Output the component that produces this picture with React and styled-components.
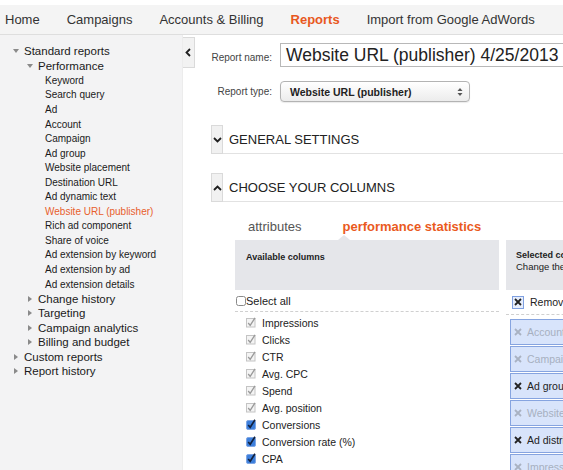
import styled, { createGlobalStyle } from "styled-components";

const GlobalStyle = createGlobalStyle`
  html, body {
    margin: 0;
    padding: 0;
    background: #fff;
  }
  body {
    font-family: "Liberation Sans", Arial, sans-serif;
    color: #222;
  }
`;

const Page = styled.div`
  width: 563px;
  height: 470px;
  overflow: hidden;
  display: flex;
  flex-direction: column;
  background: #fff;
`;

const TopNav = styled.div`
  flex: none;
  height: 29px;
  border-top: 5px solid #fff;
  border-bottom: 1px solid #dedede;
  background: #f4f4f4;
  display: flex;
  align-items: center;
  gap: 27px;
  padding-left: 5px;
`;

const NavItem = styled.div`
  font-size: 13px;
  white-space: nowrap;
  color: ${(p) => (p.$active ? "#e8581e" : "#333")};
  font-weight: ${(p) => (p.$active ? "bold" : "normal")};
`;

const Body = styled.div`
  flex: 1;
  display: flex;
  min-height: 0;
`;

const Sidebar = styled.div`
  flex: none;
  width: 182px;
  background: #f3f3f4;
  border-right: 1px solid #ececec;
  padding-top: 9px;
`;

const TreeRow = styled.div`
  display: flex;
  align-items: center;
  height: 14.55px;
  padding-left: ${(p) => p.$indent}px;
  font-size: ${(p) => (p.$small ? "10px" : "11.5px")};
  color: ${(p) => (p.$active ? "#e8602c" : "#1a1a1a")};
  white-space: nowrap;
`;

const Tri = styled.span`
  flex: none;
  width: 0;
  height: 0;
  margin-right: ${(p) => (p.$dir === "down" ? 5 : 6)}px;
  ${(p) =>
    p.$dir === "down"
      ? `border-left: 3px solid transparent;
         border-right: 3px solid transparent;
         border-top: 4px solid #8a8a8a;`
      : `border-top: 3px solid transparent;
         border-bottom: 3px solid transparent;
         border-left: 4px solid #8a8a8a;`}
`;

const Toggle = styled.div`
  flex: none;
  align-self: flex-start;
  margin-top: 2px;
  width: 12px;
  height: 31px;
  box-sizing: border-box;
  background: #f2f2f2;
  border: 1px solid #dadada;
  border-left: none;
  display: flex;
  align-items: center;
  justify-content: center;
`;

const Main = styled.div`
  flex: 1;
  min-width: 0;
  overflow: hidden;
  padding-left: 16px;
  padding-top: 8px;
`;

const FieldRow = styled.div`
  display: flex;
  align-items: ${(p) => p.$align || "center"};
  margin-top: ${(p) => p.$mt || 0}px;
`;

const FieldLabel = styled.div`
  flex: none;
  width: 61px;
  margin-right: 8px;
  text-align: right;
  font-size: 10px;
  color: #444;
  white-space: nowrap;
`;

const NameInput = styled.div`
  flex: none;
  height: 24px;
  box-sizing: border-box;
  width: 320px;
  border: 1px solid #b8b8b8;
  padding-left: 5px;
  font-size: 17.5px;
  line-height: 22px;
  color: #222;
  white-space: nowrap;
`;

const Select = styled.div`
  flex: none;
  width: 190px;
  height: 21px;
  box-sizing: border-box;
  border: 1px solid #b3b3b3;
  border-radius: 4px;
  background: linear-gradient(#ffffff, #ececec);
  box-shadow: 0 1px 1px rgba(0, 0, 0, 0.08);
  display: flex;
  align-items: center;
  justify-content: space-between;
  padding: 0 6px 0 9px;
  font-size: 10.5px;
  font-weight: bold;
  color: #222;
`;

const SectionHeader = styled.div`
  display: flex;
  align-items: center;
  height: 28px;
  margin-top: ${(p) => p.$mt}px;
  border-bottom: 1px solid #e2e2e2;
`;

const SectionToggle = styled.div`
  flex: none;
  width: 12px;
  height: 29px;
  box-sizing: border-box;
  align-self: flex-start;
  background: #f1f1f1;
  border: 1px solid #dadada;
  display: flex;
  align-items: center;
  justify-content: center;
  margin-right: 6px;
`;

const SectionTitle = styled.div`
  font-size: 13px;
  color: #222;
  white-space: nowrap;
`;

const Tabs = styled.div`
  display: flex;
  gap: 41px;
  margin-top: 16px;
  padding-left: 37px;
  height: 16px;
  align-items: center;
`;

const Tab = styled.div`
  font-size: 13px;
  white-space: nowrap;
  color: ${(p) => (p.$active ? "#ea5a1d" : "#555")};
  font-weight: ${(p) => (p.$active ? "bold" : "normal")};
`;

const Panels = styled.div`
  display: flex;
  gap: 7px;
  margin-top: 6px;
  margin-left: 24px;
`;

const Panel = styled.div`
  position: relative;
  flex: none;
  width: ${(p) => p.$w}px;
`;

const Notch = styled.div`
  position: absolute;
  top: -5px;
  left: 103px;
  width: 0;
  height: 0;
  border-left: 6px solid transparent;
  border-right: 6px solid transparent;
  border-bottom: 5px solid #e5e6ea;
`;

const PanelHead = styled.div`
  height: 50px;
  box-sizing: border-box;
  background: #e5e6ea;
  padding: ${(p) => (p.$pad ? p.$pad : "11px 11px")};
  font-size: 9px;
  line-height: 12px;
  color: #222;
  white-space: nowrap;
`;

const HeadTitle = styled.div`
  font-weight: bold;
`;

const HeadSub = styled.div`
  font-size: 9.5px;
`;

const ControlRow = styled.div`
  display: flex;
  align-items: center;
  height: 14px;
  margin-top: ${(p) => p.$mt || 4}px;
  padding-left: ${(p) => p.$pl || 1}px;
  padding-bottom: ${(p) => p.$pb || 3}px;
  border-bottom: 1px dashed #d0d0d0;
  font-size: ${(p) => p.$fs || 11}px;
  color: #222;
  white-space: nowrap;
`;

const ColumnList = styled.div`
  padding-top: 2px;
  padding-left: 11px;
`;

const ColumnItem = styled.div`
  display: flex;
  align-items: center;
  height: 17px;
  font-size: 10.5px;
  color: #222;
  gap: 6px;
  white-space: nowrap;
`;

const ChipList = styled.div`
  padding-top: 4px;
  padding-left: 4px;
  display: flex;
  flex-direction: column;
  gap: 1px;
`;

const Chip = styled.div`
  display: flex;
  align-items: center;
  gap: 5px;
  height: 26px;
  box-sizing: border-box;
  width: 120px;
  padding-left: 3px;
  background: #d8e4fb;
  border: 1px solid #86a4e0;
  font-size: 10.5px;
  color: ${(p) => (p.$dim ? "#a7b0c0" : "#222")};
  white-space: nowrap;
`;

const RemoveBox = styled.div`
  flex: none;
  width: 12px;
  height: 13px;
  box-sizing: border-box;
  border: 1px solid #7e9fe0;
  background: #e7eefc;
  display: flex;
  align-items: center;
  justify-content: center;
  margin-right: 6px;
`;

const Chevron = ({ dir }) => {
  const d = {
    left: "M5 1 L1.5 4.5 L5 8",
    down: "M1 2 L4.5 5.5 L8 2",
    up: "M1 6 L4.5 2.5 L8 6",
  }[dir];
  const size = dir === "left" ? [7, 9] : [9, 8];
  return (
    <svg width={size[0]} height={size[1]} viewBox={`0 0 ${size[0]} ${size[1]}`}>
      <path d={d} fill="none" stroke="#1e1e1e" strokeWidth="1.8" />
    </svg>
  );
};

const UpDown = () => (
  <svg width="6" height="10" viewBox="0 0 6 10">
    <path d="M0.5 4 L3 1 L5.5 4 Z" fill="#555" />
    <path d="M0.5 6 L3 9 L5.5 6 Z" fill="#555" />
  </svg>
);

const XMark = ({ color = "#222", size = 8 }) => (
  <svg width={size} height={size} viewBox="0 0 8 8">
    <path d="M1 1 L7 7 M7 1 L1 7" stroke={color} strokeWidth="1.8" />
  </svg>
);

const Check = ({ kind }) => {
  if (kind === "empty") {
    return (
      <svg width="10" height="10" viewBox="0 0 10 10">
        <rect x="0.5" y="0.5" width="9" height="9" rx="2" fill="#fff" stroke="#8a8a8a" />
      </svg>
    );
  }
  if (kind === "blue") {
    return (
      <svg width="10" height="11" viewBox="0 0 10 11">
        <rect x="0.5" y="1.5" width="9" height="9" rx="1.5" fill="#3c7fdc" stroke="#7fa6e4" />
        <path d="M2.2 6 L4.2 8.3 L9 0.8" fill="none" stroke="#12213d" strokeWidth="1.6" />
      </svg>
    );
  }
  return (
    <svg width="10" height="11" viewBox="0 0 10 11">
      <rect x="0.5" y="1.5" width="8.5" height="8.5" fill="#f4f4f4" stroke="#c4c4c4" />
      <path d="M2.2 6 L4.2 8.4 L9 0.8" fill="none" stroke="#9a9a9a" strokeWidth="1.3" />
    </svg>
  );
};

const navItems = ["Home", "Campaigns", "Accounts & Billing", "Reports", "Import from Google AdWords"];

const perfItems = [
  "Keyword",
  "Search query",
  "Ad",
  "Account",
  "Campaign",
  "Ad group",
  "Website placement",
  "Destination URL",
  "Ad dynamic text",
  "Website URL (publisher)",
  "Rich ad component",
  "Share of voice",
  "Ad extension by keyword",
  "Ad extension by ad",
  "Ad extension details",
];

const standardMore = ["Change history", "Targeting", "Campaign analytics", "Billing and budget"];

const columns = [
  ["Impressions", "grey"],
  ["Clicks", "grey"],
  ["CTR", "grey"],
  ["Avg. CPC", "grey"],
  ["Spend", "grey"],
  ["Avg. position", "grey"],
  ["Conversions", "blue"],
  ["Conversion rate (%)", "blue"],
  ["CPA", "blue"],
];

const chips = [
  ["Account", true],
  ["Campaign", true],
  ["Ad group", false],
  ["Website placement", true],
  ["Ad distribution", false],
  ["Impressions", true],
];

export default function App() {
  return (
    <Page>
      <GlobalStyle />
      <TopNav>
        {navItems.map((n) => (
          <NavItem key={n} $active={n === "Reports"}>
            {n}
          </NavItem>
        ))}
      </TopNav>

      <Body>
        <Sidebar>
          <TreeRow $indent={13}>
            <Tri $dir="down" />
            Standard reports
          </TreeRow>
          <TreeRow $indent={27}>
            <Tri $dir="down" />
            Performance
          </TreeRow>
          {perfItems.map((t) => (
            <TreeRow key={t} $indent={45} $small $active={t === "Website URL (publisher)"}>
              {t}
            </TreeRow>
          ))}
          {standardMore.map((t) => (
            <TreeRow key={t} $indent={28}>
              <Tri $dir="right" />
              {t}
            </TreeRow>
          ))}
          <TreeRow $indent={14}>
            <Tri $dir="right" />
            Custom reports
          </TreeRow>
          <TreeRow $indent={14}>
            <Tri $dir="right" />
            Report history
          </TreeRow>
        </Sidebar>

        <Toggle>
          <Chevron dir="left" />
        </Toggle>

        <Main>
          <FieldRow $align="baseline">
            <FieldLabel>Report name:</FieldLabel>
            <NameInput>Website URL (publisher) 4/25/2013</NameInput>
          </FieldRow>
          <FieldRow $mt={14}>
            <FieldLabel>Report type:</FieldLabel>
            <Select>
              <span>Website URL (publisher)</span>
              <UpDown />
            </Select>
          </FieldRow>

          <SectionHeader $mt={23}>
            <SectionToggle>
              <Chevron dir="down" />
            </SectionToggle>
            <SectionTitle>GENERAL SETTINGS</SectionTitle>
          </SectionHeader>

          <SectionHeader $mt={19}>
            <SectionToggle>
              <Chevron dir="up" />
            </SectionToggle>
            <SectionTitle>CHOOSE YOUR COLUMNS</SectionTitle>
          </SectionHeader>

          <Tabs>
            <Tab>attributes</Tab>
            <Tab $active>performance statistics</Tab>
          </Tabs>

          <Panels>
            <Panel $w={264}>
              <Notch />
              <PanelHead>
                <HeadTitle>Available columns</HeadTitle>
              </PanelHead>
              <ControlRow>
                <Check kind="empty" />
                Select all
              </ControlRow>
              <ColumnList>
                {columns.map(([name, kind]) => (
                  <ColumnItem key={name}>
                    <Check kind={kind} />
                    {name}
                  </ColumnItem>
                ))}
              </ColumnList>
            </Panel>

            <Panel $w={200}>
              <PanelHead $pad="9px 10px">
                <HeadTitle>Selected columns</HeadTitle>
                <HeadSub>Change the order of columns</HeadSub>
              </PanelHead>
              <ControlRow $mt={5} $pl={6} $pb={5} $fs={10.5}>
                <RemoveBox>
                  <XMark size={8} />
                </RemoveBox>
                Remove all
              </ControlRow>
              <ChipList>
                {chips.map(([name, dim]) => (
                  <Chip key={name} $dim={dim}>
                    <XMark color={dim ? "#a9b2c2" : "#222"} />
                    {name}
                  </Chip>
                ))}
              </ChipList>
            </Panel>
          </Panels>
        </Main>
      </Body>
    </Page>
  );
}
